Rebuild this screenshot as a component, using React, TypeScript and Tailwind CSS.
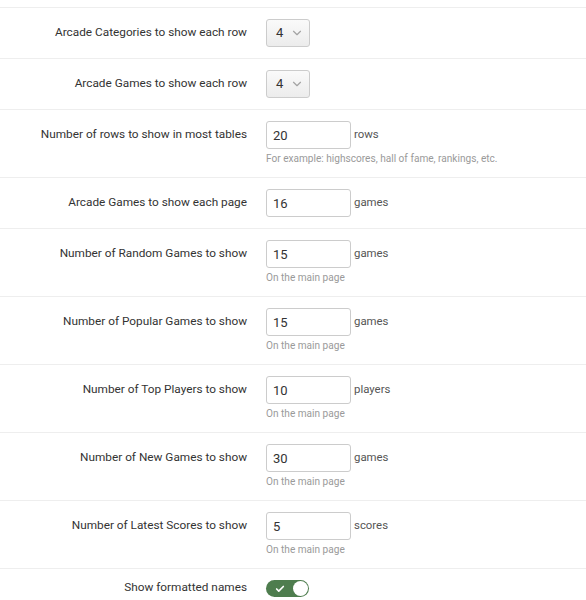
import React from 'react';
import { ChevronDown, Check } from 'lucide-react';

type Row =
  | { kind: 'select'; label: string; value: string }
  | { kind: 'input'; label: string; value: string; unit?: string; help?: string }
  | { kind: 'toggle'; label: string };

const rows: Row[] = [
  { kind: 'select', label: 'Arcade Categories to show each row', value: '4' },
  { kind: 'select', label: 'Arcade Games to show each row', value: '4' },
  { kind: 'input', label: 'Number of rows to show in most tables', value: '20', unit: 'rows', help: 'For example: highscores, hall of fame, rankings, etc.' },
  { kind: 'input', label: 'Arcade Games to show each page', value: '16', unit: 'games' },
  { kind: 'input', label: 'Number of Random Games to show', value: '15', unit: 'games', help: 'On the main page' },
  { kind: 'input', label: 'Number of Popular Games to show', value: '15', unit: 'games', help: 'On the main page' },
  { kind: 'input', label: 'Number of Top Players to show', value: '10', unit: 'players', help: 'On the main page' },
  { kind: 'input', label: 'Number of New Games to show', value: '30', unit: 'games', help: 'On the main page' },
  { kind: 'input', label: 'Number of Latest Scores to show', value: '5', unit: 'scores', help: 'On the main page' },
  { kind: 'toggle', label: 'Show formatted names' },
];

const Control: React.FC<{ row: Row }> = ({ row }) => {
  if (row.kind === 'select') {
    return (
      <div className="flex h-[28px] w-[44px] items-center justify-between rounded-[3px] border border-[#cccccc] bg-gradient-to-b from-[#fafafa] to-[#ececec] pl-[9px] pr-[5px] text-[13px] text-[#333]">
        <span>{row.value}</span>
        <ChevronDown size={14} strokeWidth={2} className="text-[#a3a3a3]" />
      </div>
    );
  }
  if (row.kind === 'toggle') {
    return (
      <div className="mt-[3px] flex h-[17px] w-[43px] items-center justify-between rounded-full bg-[#4e7d4e] pl-[9px] pr-[1px]">
        <Check size={10} strokeWidth={4} className="text-white" />
        <div className="h-[15px] w-[15px] rounded-full bg-white" />
      </div>
    );
  }
  return (
    <div>
      <div className="flex items-center">
        <input
          type="text"
          defaultValue={row.value}
          className="h-[28px] w-[85px] rounded-[3px] border border-[#cccccc] bg-white px-[6px] text-[13px] text-[#333] outline-none"
        />
        {row.unit && <span className="ml-[3px] text-[11.4px] text-[#555]">{row.unit}</span>}
      </div>
      {row.help && <div className="mt-[3px] text-[10.1px] leading-[14px] text-[#9a9a9a]">{row.help}</div>}
    </div>
  );
};

export default function App() {
  return (
    <div className="min-h-screen bg-white font-['Roboto','Liberation_Sans',sans-serif]">
      <div className="h-[7px]" />
      {rows.map((row, i) => {
        const toggle = row.kind === 'toggle';
        return (
          <div
            key={i}
            className={
              toggle
                ? 'flex border-t border-[#eeeeee] pt-[8px] pb-[11px]'
                : 'flex border-t border-[#eeeeee] pt-[11px] pb-[11px]'
            }
          >
            <label
              className={
                toggle
                  ? 'w-[247px] shrink-0 text-right text-[11.8px] leading-5 text-[#333]'
                  : 'w-[247px] shrink-0 pt-[3px] text-right text-[11.8px] leading-5 text-[#333]'
              }
            >
              {row.label}
            </label>
            <div className="ml-[19px]">
              <Control row={row} />
            </div>
          </div>
        );
      })}
    </div>
  );
}
